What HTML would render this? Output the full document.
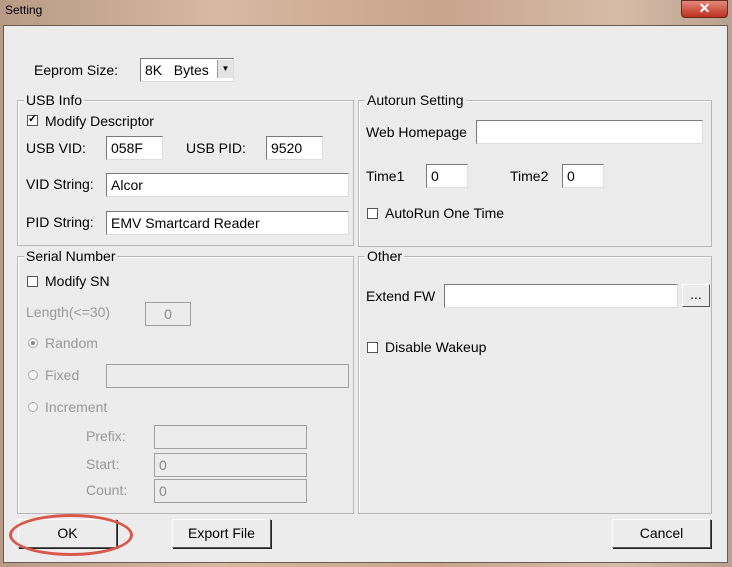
<!DOCTYPE html><html><head><style>
body{margin:0;width:732px;height:567px;overflow:hidden;background:linear-gradient(90deg,#b89a86,#d8b8a0 30%,#c9a48c 60%,#d6bca8 85%,#b8a090);font-family:"Liberation Sans",sans-serif;font-size:14px;color:#000;position:relative}
.a{position:absolute}
.panel{left:3px;top:25px;width:723px;height:536px;background:#ececec;border:1px solid #6a5a50}
.grp{position:absolute;border:1px solid #b8b8b8;box-shadow:inset 1px 1px 0 #fff}
.lg{position:absolute;top:-9px;left:6px;background:#ececec;padding:0 2px}
.in{position:absolute;background:#fff;border:1px solid #7a7a7a;border-right-color:#ddd;border-bottom-color:#ddd;box-sizing:border-box;padding:2px 4px;height:24px;line-height:18px}
.dis{background:#ececec;border-color:#a0a0a0;color:#888}
.g{color:#999}
.cb{position:absolute;width:11px;height:11px;border:1px solid #555;background:#fff;box-sizing:border-box}
.rb{position:absolute;width:10px;height:10px;border:1px solid #aaa;border-radius:50%;background:#f4f4f4;box-sizing:border-box}
.btn{position:absolute;height:29px;background:#ececec;border:1px solid #fff;border-right-color:#555;border-bottom-color:#555;box-sizing:border-box;text-align:center;line-height:27px;box-shadow:1px 1px 0 #222}
</style></head><body>
<div class="a" style="left:5px;top:3px;font-size:12px">Setting</div>
<div class="a" style="left:681px;top:0;width:45px;height:16px;background:linear-gradient(#e08a7a,#c03020);border:1px solid #6a2a20;border-radius:0 0 4px 4px;color:#fff;text-align:center;font-weight:bold;line-height:14px">✕</div>
<div class="a panel"></div>
<div class="a" style="left:34px;top:62px">Eeprom Size:</div>
<div class="in" style="left:140px;top:58px;width:94px">8K &nbsp; Bytes</div>
<div class="a" style="left:217px;top:60px;width:15px;height:18px;background:#e4e4e4;border-left:1px solid #999;font-size:8px;text-align:center;line-height:18px">▼</div>

<div class="grp" style="left:17px;top:100px;width:335px;height:144px"><span class="lg">USB Info</span></div>
<div class="cb" style="left:27px;top:115px"><span style="position:absolute;left:0;top:-4px;font-size:11px;font-weight:bold">✓</span></div>
<div class="a" style="left:45px;top:113px">Modify Descriptor</div>
<div class="a" style="left:26px;top:140px">USB VID:</div>
<div class="in" style="left:106px;top:136px;width:57px">058F</div>
<div class="a" style="left:186px;top:140px">USB PID:</div>
<div class="in" style="left:266px;top:136px;width:57px">9520</div>
<div class="a" style="left:26px;top:176px">VID String:</div>
<div class="in" style="left:106px;top:173px;width:243px">Alcor</div>
<div class="a" style="left:26px;top:214px">PID String:</div>
<div class="in" style="left:106px;top:211px;width:243px">EMV Smartcard Reader</div>

<div class="grp" style="left:358px;top:100px;width:352px;height:145px"><span class="lg">Autorun Setting</span></div>
<div class="a" style="left:366px;top:124px">Web Homepage</div>
<div class="in" style="left:476px;top:120px;width:227px"></div>
<div class="a" style="left:366px;top:168px">Time1</div>
<div class="in" style="left:426px;top:164px;width:42px">0</div>
<div class="a" style="left:510px;top:168px">Time2</div>
<div class="in" style="left:562px;top:164px;width:42px">0</div>
<div class="cb" style="left:367px;top:208px"></div>
<div class="a" style="left:385px;top:205px">AutoRun One Time</div>

<div class="grp" style="left:17px;top:256px;width:335px;height:256px"><span class="lg">Serial Number</span></div>
<div class="cb" style="left:27px;top:276px"></div>
<div class="a" style="left:45px;top:273px">Modify SN</div>
<div class="a g" style="left:26px;top:304px">Length(&lt;=30)</div>
<div class="in dis" style="left:145px;top:302px;width:46px;text-align:center">0</div>
<div class="rb" style="left:28px;top:338px"><span style="position:absolute;left:2px;top:2px;width:4px;height:4px;border-radius:50%;background:#888"></span></div>
<div class="a g" style="left:45px;top:335px">Random</div>
<div class="rb" style="left:28px;top:370px"></div>
<div class="a g" style="left:45px;top:367px">Fixed</div>
<div class="in dis" style="left:106px;top:364px;width:243px"></div>
<div class="rb" style="left:28px;top:402px"></div>
<div class="a g" style="left:45px;top:399px">Increment</div>
<div class="a g" style="left:86px;top:428px">Prefix:</div>
<div class="in dis" style="left:154px;top:425px;width:153px"></div>
<div class="a g" style="left:86px;top:456px">Start:</div>
<div class="in dis" style="left:154px;top:453px;width:153px">0</div>
<div class="a g" style="left:86px;top:482px">Count:</div>
<div class="in dis" style="left:154px;top:479px;width:153px">0</div>

<div class="grp" style="left:358px;top:256px;width:352px;height:256px"><span class="lg">Other</span></div>
<div class="a" style="left:366px;top:288px">Extend FW</div>
<div class="in" style="left:444px;top:284px;width:234px"></div>
<div class="btn" style="left:682px;top:284px;width:28px;height:23px;line-height:18px;box-shadow:none">...</div>
<div class="cb" style="left:367px;top:342px"></div>
<div class="a" style="left:385px;top:339px">Disable Wakeup</div>

<div class="btn" style="left:18px;top:519px;width:99px">OK</div>
<div class="btn" style="left:172px;top:519px;width:99px">Export File</div>
<div class="btn" style="left:612px;top:519px;width:99px">Cancel</div>
<div class="a" style="left:9px;top:514px;width:118px;height:36px;border:3px solid #d9584c;border-radius:50%"></div>
</body></html>
